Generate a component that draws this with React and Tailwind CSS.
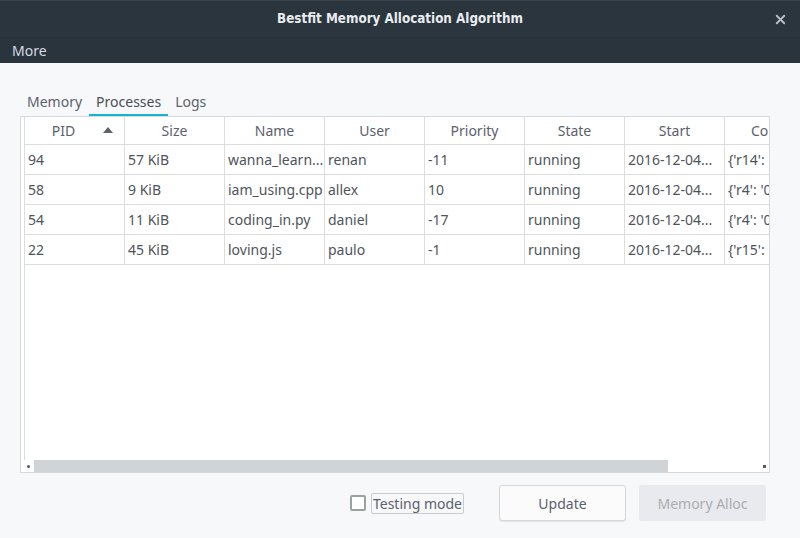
import { X } from "lucide-react";

const columns = ["PID", "Size", "Name", "User", "Priority", "State", "Start", "Context"];

const rows = [
  ["94", "57 KiB", "wanna_learn...", "renan", "-11", "running", "2016-12-04...", "{'r14': '0"],
  ["58", "9 KiB", "iam_using.cpp", "allex", "10", "running", "2016-12-04...", "{'r4': '0"],
  ["54", "11 KiB", "coding_in.py", "daniel", "-17", "running", "2016-12-04...", "{'r4': '0"],
  ["22", "45 KiB", "loving.js", "paulo", "-1", "running", "2016-12-04...", "{'r15': '0"],
];

const Tabs = () => {
  const tabs = ["Memory", "Processes", "Logs"];
  return (
    <div className="flex h-[28px] items-stretch text-[14px] text-[#5c616c]">
      {tabs.map((t) => (
        <div
          key={t}
          className={
            t === "Processes"
              ? "flex items-center px-[7px] border-b-2 border-[#17b4cf] text-[#4a4f57]"
              : "flex items-center px-[7px] border-b-2 border-transparent"
          }
        >
          {t}
        </div>
      ))}
    </div>
  );
};

const SortArrow = () => (
  <svg width="10" height="6" viewBox="0 0 10 6" className="absolute right-[11px] top-[10px]">
    <path d="M0 6 L5 0 L10 6 Z" fill="#5c616c" />
  </svg>
);

const ProcessTable = () => (
  <div className="relative flex h-[357px] w-[750px] flex-col overflow-hidden border border-[#d6d9dc] bg-white">
    <div className="flex flex-1 overflow-hidden">
      <div className="w-[4px] shrink-0 border-r border-[#dcdcdc]" />
      <div className="flex flex-col">
        <div className="flex h-[28px] shrink-0 border-b border-[#dcdcdc] text-[14px] text-[#5c616c]">
          {columns.map((c, i) => (
            <div
              key={c}
              className={
                i === columns.length - 1
                  ? "flex w-[140px] shrink-0 items-center whitespace-nowrap border-r border-[#dcdcdc] pl-[26px]"
                  : "relative flex w-[100px] shrink-0 items-center justify-center border-r border-[#dcdcdc]"
              }
            >
              <span className={i === 0 ? "mr-[22px]" : ""}>{c}</span>
              {i === 0 && <SortArrow />}
            </div>
          ))}
        </div>
        {rows.map((r) => (
          <div key={r[0]} className="flex h-[30px] shrink-0 border-b border-[#dcdcdc] text-[14px] text-[#4f545b]">
            {r.map((v, i) => (
              <div
                key={i}
                className={
                  i === r.length - 1
                    ? "flex w-[140px] shrink-0 items-center overflow-hidden whitespace-nowrap border-r border-[#dcdcdc] pl-[3px]"
                    : "flex w-[100px] shrink-0 items-center overflow-hidden whitespace-nowrap border-r border-[#dcdcdc] pl-[3px]"
                }
              >
                {v}
              </div>
            ))}
          </div>
        ))}
      </div>
    </div>
    <div className="flex h-[12px] shrink-0 items-center">
      <div className="ml-[6px] h-[3px] w-[3px] rounded-full bg-[#555a60]" />
      <div className="ml-[4px] h-[12px] w-[634px] bg-[#d1d4d6]" />
      <div className="flex-1" />
      <div className="mr-[3px] h-[3px] w-[3px] bg-[#555a60]" />
    </div>
  </div>
);

const App = () => {
  return (
    <div className="flex h-[538px] w-[800px] flex-col bg-[#f7f8fa] font-['Noto_Sans',sans-serif]">
      <div className="grid h-[37px] shrink-0 grid-cols-[1fr_auto_1fr] items-center border-t border-[#3a444e] bg-[#2b353e]">
        <div />
        <div className="font-['DejaVu_Sans_Condensed',sans-serif] text-[13.3px] font-bold text-[#e8ecef]">
          Bestfit Memory Allocation Algorithm
        </div>
        <div className="flex justify-end pr-[12px]">
          <X size={15} strokeWidth={3} className="text-[#b6bcc2]" />
        </div>
      </div>
      <div className="flex h-[26px] shrink-0 items-center border-t border-[#27313a] bg-[#2a343d] px-[12px] text-[14px] text-[#d3dae3]">
        More
      </div>
      <div className="flex flex-1 flex-col px-[20px] pt-[25px]">
        <Tabs />
        <ProcessTable />
        <div className="mt-[12px] flex h-[36px] items-center justify-end pr-[14px]">
          <div className="h-[16px] w-[16px] rounded-[2px] border-2 border-[#9ba2a3] bg-white" />
          <div className="ml-[5px] rounded-[2px] border border-[#c8ccce] px-[1px] text-[14px] leading-[19px] text-[#5c616c]">
            Testing mode
          </div>
          <button className="ml-[35px] h-[36px] w-[127px] rounded-[3px] border border-[#d3d6db] bg-[#fbfbfc] text-[14px] text-[#5c616c] shadow-[0_1px_1px_rgba(0,0,0,0.08)]">
            Update
          </button>
          <button className="ml-[13px] h-[36px] w-[127px] rounded-[3px] bg-[#e9eaed] text-[14px] text-[#a9adb3]">
            Memory Alloc
          </button>
        </div>
      </div>
    </div>
  );
};

export default App;
